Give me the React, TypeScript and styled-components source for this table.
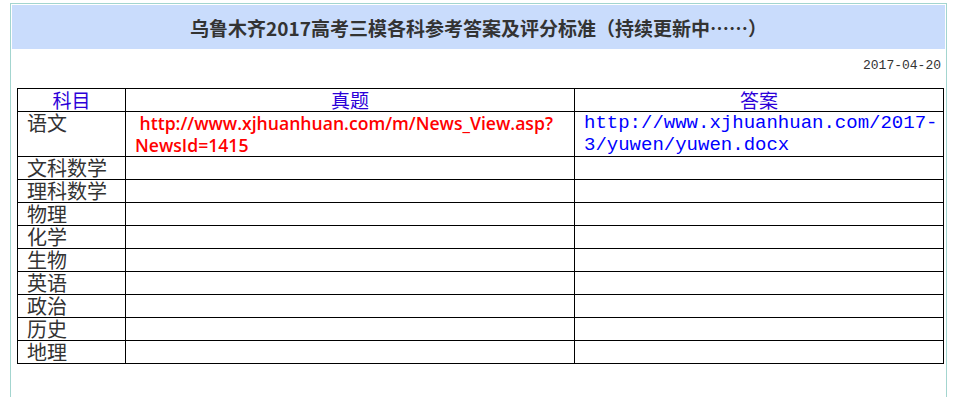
import React, { FC } from "react";
import styled, { createGlobalStyle } from "styled-components";

const GlobalStyle = createGlobalStyle`
    html, body {
        margin: 0;
        padding: 0;
        background: #fff;
        overflow: hidden;
    }
    body {
        font-family: "Noto Sans CJK SC", "Liberation Sans", sans-serif;
        color: #333;
    }
`;

const subjects = ["文科数学", "理科数学", "物理", "化学", "生物", "英语", "政治", "历史", "地理"];

const Page = styled.div`
    padding: 3px 7px 0 10px;
`;

const Frame = styled.div`
    box-sizing: border-box;
    width: 937px;
    height: 394px;
    border: 1px solid #a3d5cf;
    border-bottom: none;
    padding: 1px 1px 0 1px;
`;

const TitleBar = styled.div`
    height: 44px;
    background-color: #c9dcfc;
    display: flex;
    align-items: center;
    justify-content: center;

    & h1 {
        margin: 0;
        font-size: 19px;
        font-weight: bold;
        color: #333;
    }
`;

const DateLine = styled.div`
    margin-top: 9px;
    padding-right: 4px;
    text-align: right;
    font-family: "Liberation Mono", monospace;
    font-size: 13px;
    line-height: 16px;
    color: #333;
`;

const Grid = styled.table`
    margin: 14px 0 0 5px;
    width: 927px;
    border-collapse: collapse;
    border: 1px solid #000;
    table-layout: fixed;

    & td {
        border: 1px solid #000;
        padding: 0 0 0 9px;
        height: 22px;
        line-height: 22px;
        vertical-align: top;
    }
`;

const HeadCell = styled.td`
    && {
        text-align: center;
        padding: 0;
        color: #2c00d8;
        font-size: 19px;
    }

    & span {
        display: block;
        height: 22px;
        line-height: 22px;
    }
`;

const Subject = styled.td`
    font-size: 20px;
    color: #333;

    & span {
        display: block;
        height: 22px;
        line-height: 22px;
    }
`;

const QuestionLink = styled.span`
    display: block;
    color: #ff0000;
    font-family: "Open Sans", sans-serif;
    font-weight: 600;
    font-size: 17.6px;
    line-height: 22px;
    white-space: pre;
`;

const AnswerLink = styled.span`
    display: block;
    color: #0000ff;
    font-family: "Liberation Mono", monospace;
    font-size: 19px;
    line-height: 22px;
`;

const App: FC = () => {
    return (
        <Page>
            <GlobalStyle />
            <Frame>
                <TitleBar>
                    <h1>乌鲁木齐2017高考三模各科参考答案及评分标准（持续更新中……）</h1>
                </TitleBar>
                <DateLine>2017-04-20</DateLine>
                <Grid>
                    <colgroup>
                        <col style={{ width: 108 }} />
                        <col style={{ width: 449 }} />
                        <col />
                    </colgroup>
                    <tbody>
                        <tr>
                            <HeadCell>
                                <span>科目</span>
                            </HeadCell>
                            <HeadCell>
                                <span>真题</span>
                            </HeadCell>
                            <HeadCell>
                                <span>答案</span>
                            </HeadCell>
                        </tr>
                        <tr>
                            <Subject>
                                <span>语文</span>
                            </Subject>
                            <td>
                                <QuestionLink>
                                    {" http://www.xjhuanhuan.com/m/News_View.asp?"}
                                    <br />
                                    NewsId=1415
                                </QuestionLink>
                            </td>
                            <td>
                                <AnswerLink>
                                    http://www.xjhuanhuan.com/2017-
                                    <br />
                                    3/yuwen/yuwen.docx
                                </AnswerLink>
                            </td>
                        </tr>
                        {subjects.map((s) => (
                            <tr key={s}>
                                <Subject>
                                    <span>{s}</span>
                                </Subject>
                                <td />
                                <td />
                            </tr>
                        ))}
                    </tbody>
                </Grid>
            </Frame>
        </Page>
    );
};

export default App;
